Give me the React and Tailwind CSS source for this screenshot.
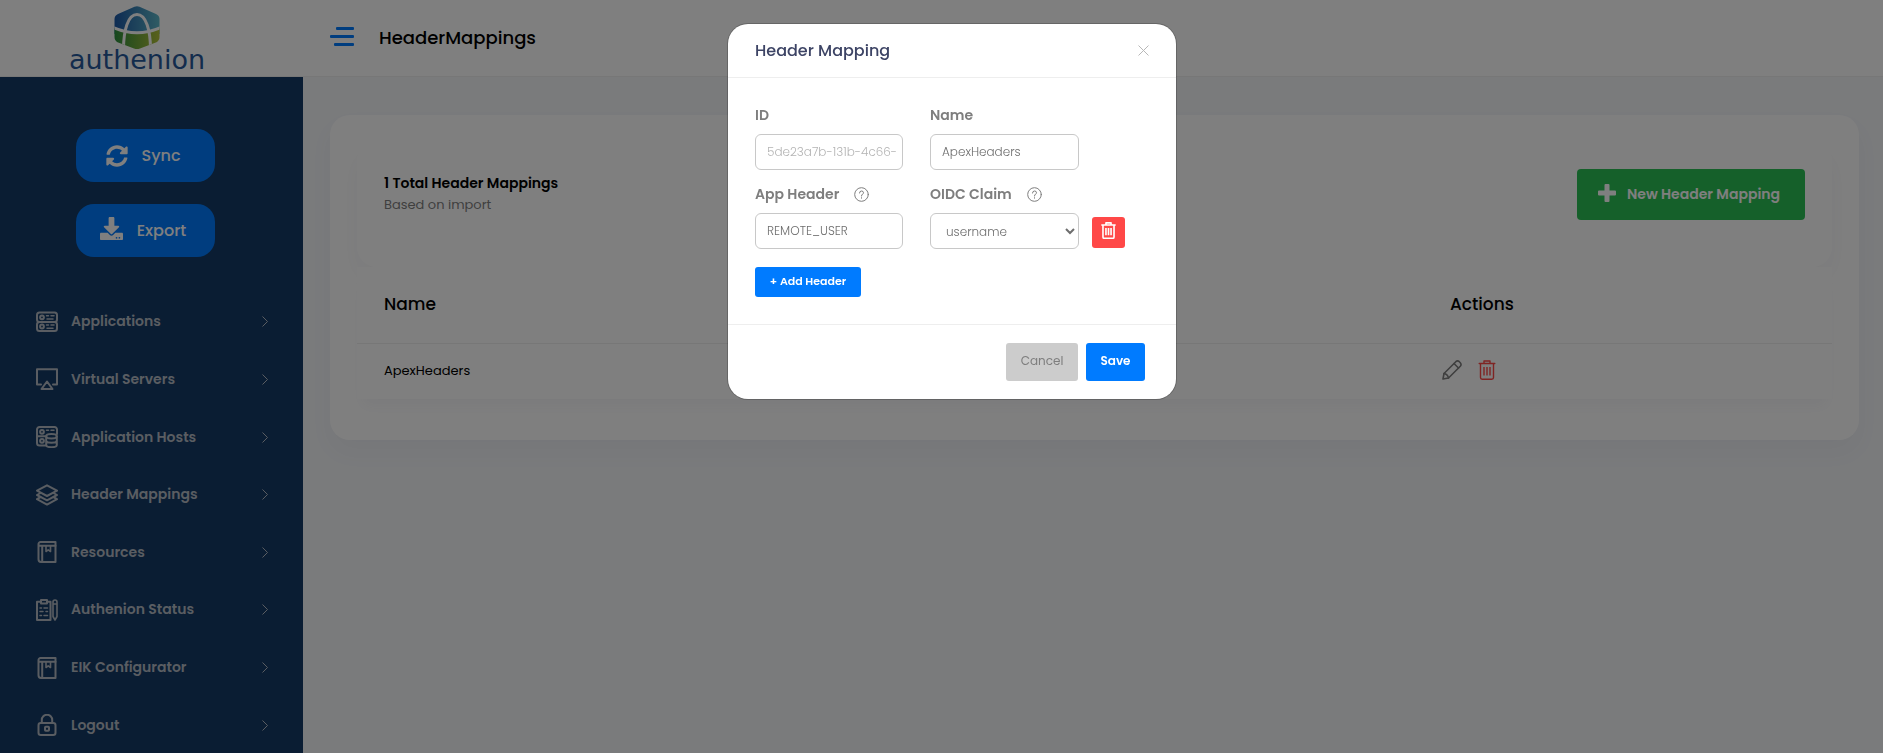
import React from "react";

function Logo() {
  return (
    <svg width="146" height="70" viewBox="0 0 146 70" role="img" aria-label="authenion">
      <defs>
        <linearGradient id="sky" x1="0" y1="0" x2="1" y2="0">
          <stop offset="0" stopColor="#1b57a6" />
          <stop offset="1" stopColor="#5fb9c9" />
        </linearGradient>
        <linearGradient id="leaf" x1="0" y1="0" x2="1" y2="0">
          <stop offset="0" stopColor="#2a8f3e" />
          <stop offset="1" stopColor="#b4c238" />
        </linearGradient>
        <clipPath id="hex">
          <path d="M70.500 .8Q73 -.4 75.500 .8L92 8Q95.500 9.600 95.500 13V31Q95.500 34.500 92.500 36.200L76 42.600Q73 43.600 70 42.600L53.500 36.200Q50.500 34.500 50.500 31V13Q50.500 9.600 54 8Z" />
        </clipPath>
      </defs>
      <g clipPath="url(#hex)">
        <rect x="50" y="0" width="46" height="28" fill="url(#sky)" />
        <path d="M50 22Q73 32 96 22V44H50Z" fill="url(#leaf)" />
        <path d="M49 21.500Q73 32 97 21.500" fill="none" stroke="#fff" strokeWidth="3" />
        <path d="M59.500 44C59.500 24 64 8.500 73 8.500S86.500 24 86.500 44" fill="none" stroke="#fff" strokeWidth="3" />
      </g>
      <text x="73" y="63" textAnchor="middle" fontSize="27" fill="#27599b" fontFamily="DejaVu Sans, sans-serif">
        authenion
      </text>
    </svg>
  );
}

function Line({ children, size = 22, width = 2, box = 22 }) {
  return (
    <svg
      width={size}
      height={size}
      viewBox={`0 0 ${box} ${box}`}
      fill="none"
      stroke="currentColor"
      strokeWidth={width}
      strokeLinecap="round"
      strokeLinejoin="round"
      aria-hidden="true"
    >
      {children}
    </svg>
  );
}

const ServersIcon = () => (
  <Line>
    <rect x="1" y="1.500" width="20" height="9.500" rx="2.500" />
    <rect x="1" y="11" width="20" height="9" rx="2.500" />
    <circle cx="6" cy="6.300" r="1.900" />
    <circle cx="6" cy="15.500" r="1.900" />
    <path d="M10.500 4.700h2M15 4.700h3M11 8h6M10.500 14h2M15 14h3M11 17.200h6" strokeWidth="1.500" />
  </Line>
);

const ScreenIcon = () => (
  <Line>
    <path d="M5 16.500H1V1.200H21V16.500H17" />
    <path d="M11 13.500L16.500 21H5.500Z" />
  </Line>
);

const HostsIcon = () => (
  <Line>
    <path d="M9.500 19.500H3.500A2.500 2.500 0 0 1 1 17V3.500A2.500 2.500 0 0 1 3.500 1H18.500A2.500 2.500 0 0 1 21 3.500V8" />
    <path d="M1 10.300H9.500" />
    <circle cx="6" cy="5.800" r="1.900" />
    <circle cx="6" cy="14.800" r="1.900" />
    <path d="M10.500 4.200h2M15 4.200h3" strokeWidth="1.500" />
    <ellipse cx="15.500" cy="10.200" rx="5.300" ry="2.200" />
    <path d="M10.200 10.200V19C10.200 20.200 12.500 21.200 15.500 21.200S20.800 20.200 20.800 19V10.200M10.200 14.500C10.200 15.700 12.500 16.700 15.500 16.700S20.800 15.700 20.800 14.500" />
  </Line>
);

const LayersIcon = () => (
  <Line>
    <path d="M11 1.300L21 6.700L11 12L1 6.700Z" />
    <path d="M4.500 9L1 11L11 16.300L21 11L17.500 9" />
    <path d="M4.500 13.200L1 15.200L11 20.600L21 15.200L17.500 13.200" />
  </Line>
);

const BookIcon = () => (
  <Line>
    <path d="M4.500 1H19.500V21H5A2.800 2.800 0 0 1 2.500 18.200V3A2 2 0 0 1 4.500 1Z" />
    <path d="M3 4.800H19.500M6.200 4.800V20.500" />
    <path d="M10 5V10.500L12.200 8.800L14.500 10.500V5" strokeWidth="1.600" />
  </Line>
);

const ClipboardIcon = () => (
  <Line>
    <path d="M4.500 2.700H1V21H14.500V2.700H11.500" />
    <path d="M5 1H11V4.500H5Z" />
    <path d="M4 9h1.500M8 9h3.500M4 12.500h3M10 12.500h1.500M4 16.500h1.500M8 16.500h3.500" strokeWidth="1.500" />
    <path d="M17 3Q17 1 19 1T21 3V17.500L19 21L17 17.500ZM17 5H21" strokeWidth="1.600" />
  </Line>
);

const LockIcon = () => (
  <Line>
    <rect x="2.500" y="9" width="17" height="12" rx="2.300" />
    <path d="M5.800 9V6A5.200 5.200 0 0 1 16.200 6V9" />
    <rect x="9" y="12.800" width="4" height="4" rx=".8" />
  </Line>
);

const SyncIcon = () => (
  <svg width="22" height="22" viewBox="0 0 512 512" fill="currentColor" aria-hidden="true">
    <path d="M370.720 133.280C339.458 104.008 298.888 87.962 255.848 88c-77.458.068-144.328 53.178-162.791 126.850-1.344 5.363-6.122 9.150-11.651 9.150H24.103c-7.498 0-13.194-6.807-11.807-14.176C33.933 94.924 134.813 8 256 8c66.448 0 126.791 26.136 171.315 68.685L463.030 40.970C478.149 25.851 504 36.559 504 57.941V192c0 13.255-10.745 24-24 24H345.941c-21.382 0-32.090-25.851-16.971-40.971l41.750-41.749zM32 296h134.059c21.382 0 32.090 25.851 16.971 40.971l-41.750 41.750c31.262 29.273 71.835 45.319 114.876 45.280 77.418-.070 144.315-53.144 162.787-126.849 1.344-5.363 6.122-9.150 11.651-9.150h57.304c7.498 0 13.194 6.807 11.807 14.176C478.067 417.076 377.187 504 256 504c-66.448 0-126.791-26.136-171.315-68.685L48.970 471.030C33.851 486.149 8 475.441 8 454.059V320c0-13.255 10.745-24 24-24z" />
  </svg>
);

const ExportIcon = () => (
  <svg width="23" height="23" viewBox="0 0 512 512" fill="currentColor" className="mb-1" aria-hidden="true">
    <path d="M216 0h80c13.300 0 24 10.700 24 24v168h87.700c17.800 0 26.700 21.500 14.100 34.100L269.700 378.300c-7.500 7.500-19.800 7.500-27.300 0L90.100 226.100c-12.600-12.600-3.700-34.100 14.100-34.100H192V24c0-13.300 10.700-24 24-24zm296 376v112c0 13.300-10.700 24-24 24H24c-13.300 0-24-10.700-24-24V376c0-13.300 10.700-24 24-24h146.700l49 49c20.100 20.100 52.500 20.100 72.600 0l49-49H488c13.300 0 24 10.700 24 24zm-124 88c0-11-9-20-20-20s-20 9-20 20 9 20 20 20 20-9 20-20zm64 0c0-11-9-20-20-20s-20 9-20 20 9 20 20 20 20-9 20-20z" />
  </svg>
);

const Chevron = () => (
  <svg width="6" height="11" viewBox="0 0 6 11" fill="none" stroke="currentColor" aria-hidden="true">
    <path d="M.5 .5L5.500 5.500L.5 10.500" />
  </svg>
);

const TrashIcon = ({ size = 20, width = 1.4 }) => (
  <Line size={size} box={20} width={width}>
    <path d="M2.200 3.500H17.800M7 3.300V1H13V3.300M3.500 3.500V17.500Q3.500 19.200 5.200 19.200H14.800Q16.500 19.200 16.500 17.500V3.500" />
    <path d="M7 7V15.500M10 7V15.500M13 7V15.500" strokeLinecap="butt" />
  </Line>
);

const PencilIcon = () => (
  <Line size={20} box={20} width={1.6}>
    <path d="M1 19L2 13.500L13.800 1.700Q15.500 .2 17.300 1.700L18.300 2.700Q19.800 4.500 18.300 6.200L6.500 18Z" />
    <path d="M2 13.500Q5.500 14 6.500 18M12 3.500L16.500 8" />
  </Line>
);

const HelpIcon = () => (
  <Line size={15} box={15} width={1}>
    <circle cx="7.500" cy="7.500" r="6.800" />
    <path d="M5.500 6Q5.500 4 7.500 4T9.500 5.800Q9.500 6.700 8.500 7.200T7.500 9M7.500 10.700V11.200" />
  </Line>
);

const menu = [
  ["Applications", ServersIcon],
  ["Virtual Servers", ScreenIcon],
  ["Application Hosts", HostsIcon],
  ["Header Mappings", LayersIcon],
  ["Resources", BookIcon],
  ["Authenion Status", ClipboardIcon],
  ["EIK Configurator", BookIcon],
  ["Logout", LockIcon],
];

function Sidebar() {
  return (
    <aside className="w-[303px] shrink-0 bg-[#153b66] pt-[52px]">
      <div className="flex flex-col gap-[22px] pl-[76px]">
        <button className="flex h-[53px] w-[139px] items-center justify-center gap-3.5 rounded-[18px] bg-[#007bff] pr-[5px] text-base font-medium text-white">
          <SyncIcon />
          Sync
        </button>
        <button className="flex h-[53px] w-[139px] items-center justify-center gap-3.5 rounded-[18px] bg-[#007bff] pr-[5px] text-base font-medium text-white">
          <ExportIcon />
          Export
        </button>
      </div>
      <nav className="mt-9 grid h-[461px] auto-rows-fr text-[#b4bbc4]">
        {menu.map(([label, Icon]) => (
          <a key={label} href="#" className="flex items-center gap-[13px] pl-9 pr-[35px] text-[14px] font-semibold">
            <Icon />
            <span className="grow">{label}</span>
            <Chevron />
          </a>
        ))}
      </nav>
    </aside>
  );
}

function Mappings() {
  return (
    <main className="min-w-0 grow pl-[27px] pr-6 pt-[38px]">
      <section className="rounded-[20px] bg-white px-[27px] pb-[41px] pt-[27px] shadow-[0_12px_23px_rgba(62,63,112,0.04)]">
        <div className="flex h-[125px] items-start justify-between rounded-[20px] px-[27px] pt-[27px] shadow-[0_12px_23px_rgba(62,63,112,0.04)]">
          <div className="pt-[3px]">
            <h2 className="text-[14px] font-semibold leading-[22px] text-black">1 Total Header Mappings</h2>
            <p className="text-[13px] leading-[22px] text-[#7e7e7e]">Based on import</p>
          </div>
          <button className="flex h-[51px] w-[228px] items-center justify-center gap-[11px] rounded bg-[#2bc155] pr-1 text-[14px] font-semibold text-white">
            <svg width="18" height="18" viewBox="0 0 18 18" fill="currentColor" className="mb-1" aria-hidden="true">
              <path d="M7.500 0h3q1 0 1 1v5.500H17q1 0 1 1v3q0 1-1 1h-5.500V17q0 1-1 1h-3q-1 0-1-1v-5.500H1q-1 0-1-1v-3q0-1 1-1h5.500V1q0-1 1-1Z" />
            </svg>
            New Header Mapping
          </button>
        </div>
        <table className="w-full table-fixed bg-white text-left text-black shadow-[0_12px_14px_-6px_rgba(62,63,112,0.05)]">
          <thead>
            <tr className="h-[76px] border-b border-[#eeeeee] text-[17px]">
              <th className="pl-[27px] font-medium">Name</th>
              <th className="w-[382px] font-medium">Actions</th>
            </tr>
          </thead>
          <tbody>
            <tr className="h-14">
              <td className="pb-0.5 pl-[27px] text-[13px]">ApexHeaders</td>
              <td className="pb-0.5">
                <div className="-ml-2 flex gap-[15px]">
                  <button aria-label="Edit" className="text-[#7e7e7e]">
                    <PencilIcon />
                  </button>
                  <button aria-label="Delete" className="text-[#ff4847]">
                    <TrashIcon />
                  </button>
                </div>
              </td>
            </tr>
          </tbody>
        </table>
      </section>
    </main>
  );
}

function Label({ htmlFor, help, children }) {
  return (
    <div className="flex h-[43px] items-center gap-[15px] pt-1.5 text-[#7e7e7e]">
      <label htmlFor={htmlFor} className="text-[14px] font-semibold">
        {children}
      </label>
      {help && <HelpIcon />}
    </div>
  );
}

function Dialog() {
  return (
    <div className="fixed inset-0 bg-black/50 pl-[21px] pt-6">
      <div
        role="dialog"
        aria-modal="true"
        aria-labelledby="dialog-title"
        className="mx-auto w-[448px] max-w-full rounded-[20px] bg-white ring-1 ring-black/20"
      >
        <header className="flex h-[54px] items-center justify-between border-b border-[#eeeeee] px-[27px]">
          <h2 id="dialog-title" className="text-[16px] font-medium text-[#3d4465]">
            Header Mapping
          </h2>
          <button aria-label="Close" className="text-[#b8b8b8]">
            <svg width="11" height="11" viewBox="0 0 11 11" stroke="currentColor" aria-hidden="true">
              <path d="M.5 .5L10.500 10.500M10.500 .5L.5 10.500" />
            </svg>
          </button>
        </header>
        <form className="px-[27px] pb-[27px] pt-[13px] text-[12px]">
          <div className="grid grid-cols-[148px_149px_33px] gap-x-[27px]">
            <div>
              <Label htmlFor="map-id">ID</Label>
              <input
                id="map-id"
                placeholder="5de23a7b-131b-4c66-"
                className="h-9 w-full rounded-md border border-[#c8c8c8] bg-white pl-[11px] pr-1 font-light placeholder:text-[#b4b4b4]"
              />
            </div>
            <div>
              <Label htmlFor="map-name">Name</Label>
              <input
                id="map-name"
                defaultValue="ApexHeaders"
                className="h-9 w-full rounded-md border border-[#c8c8c8] px-[11px] font-light text-[#6e6e6e]"
              />
            </div>
          </div>
          <div className="flex items-end">
            <div className="mr-[27px] w-[148px]">
              <Label htmlFor="map-header" help>App Header</Label>
              <input
                id="map-header"
                defaultValue="REMOTE_USER"
                className="h-9 w-full rounded-md border border-[#c8c8c8] px-[11px] font-light text-[#6e6e6e]"
              />
            </div>
            <div className="w-[149px]">
              <Label htmlFor="map-claim" help>OIDC Claim</Label>
              <select
                id="map-claim"
                className="h-9 w-full rounded-md border border-[#c8c8c8] bg-white pl-[11px] font-light text-[#6e6e6e]"
              >
                <option>username</option>
              </select>
            </div>
            <button
              type="button"
              aria-label="Remove header"
              className="mb-px ml-[13px] flex h-[31px] w-[33px] items-center justify-center rounded-[3px] bg-[#ff4847] pb-1 text-white"
            >
              <TrashIcon size={17} width={1.9} />
            </button>
          </div>
          <button
            type="button"
            className="mt-[18px] flex h-[30px] w-[106px] items-center justify-center rounded-[3px] bg-[#007bff] pb-0.5 text-[11px] font-semibold text-white"
          >
            + Add Header
          </button>
        </form>
        <footer className="flex justify-end gap-2 border-t border-[#eeeeee] pb-[18px] pr-[31px] pt-[18px] text-[12px]">
          <button className="h-[38px] w-[72px] rounded-[3px] bg-[#cccccc] pb-0.5 text-[#7e7e7e]">Cancel</button>
          <button className="h-[38px] w-[59px] rounded-[3px] bg-[#007bff] pb-0.5 font-semibold text-white">Save</button>
        </footer>
      </div>
    </div>
  );
}

export default function App() {
  return (
    <div className="flex h-screen flex-col overflow-hidden bg-[#f4f6f9] font-[Poppins,Inter,sans-serif]">
      <header className="flex h-[77px] shrink-0 border-b border-[#eeeeee] bg-white">
        <div className="flex w-[303px] shrink-0 items-start justify-center pr-[30px] pt-1.5">
          <Logo />
        </div>
        <div className="flex items-center gap-[25px] pb-0.5 pl-[27px]">
          <button aria-label="Toggle menu" className="text-[#007bff]">
            <svg width="24" height="19" viewBox="0 0 24 19" fill="currentColor" className="mb-0.5" aria-hidden="true">
              <rect x="6" y="0" width="18" height="3" rx="1" />
              <rect x="0" y="8" width="24" height="3" rx="1" />
              <rect x="4" y="16" width="20" height="3" rx="1" />
            </svg>
          </button>
          <h1 className="text-[18px] font-medium text-black">HeaderMappings</h1>
        </div>
      </header>
      <div className="flex min-h-0 grow">
        <Sidebar />
        <Mappings />
      </div>
      <Dialog />
    </div>
  );
}
